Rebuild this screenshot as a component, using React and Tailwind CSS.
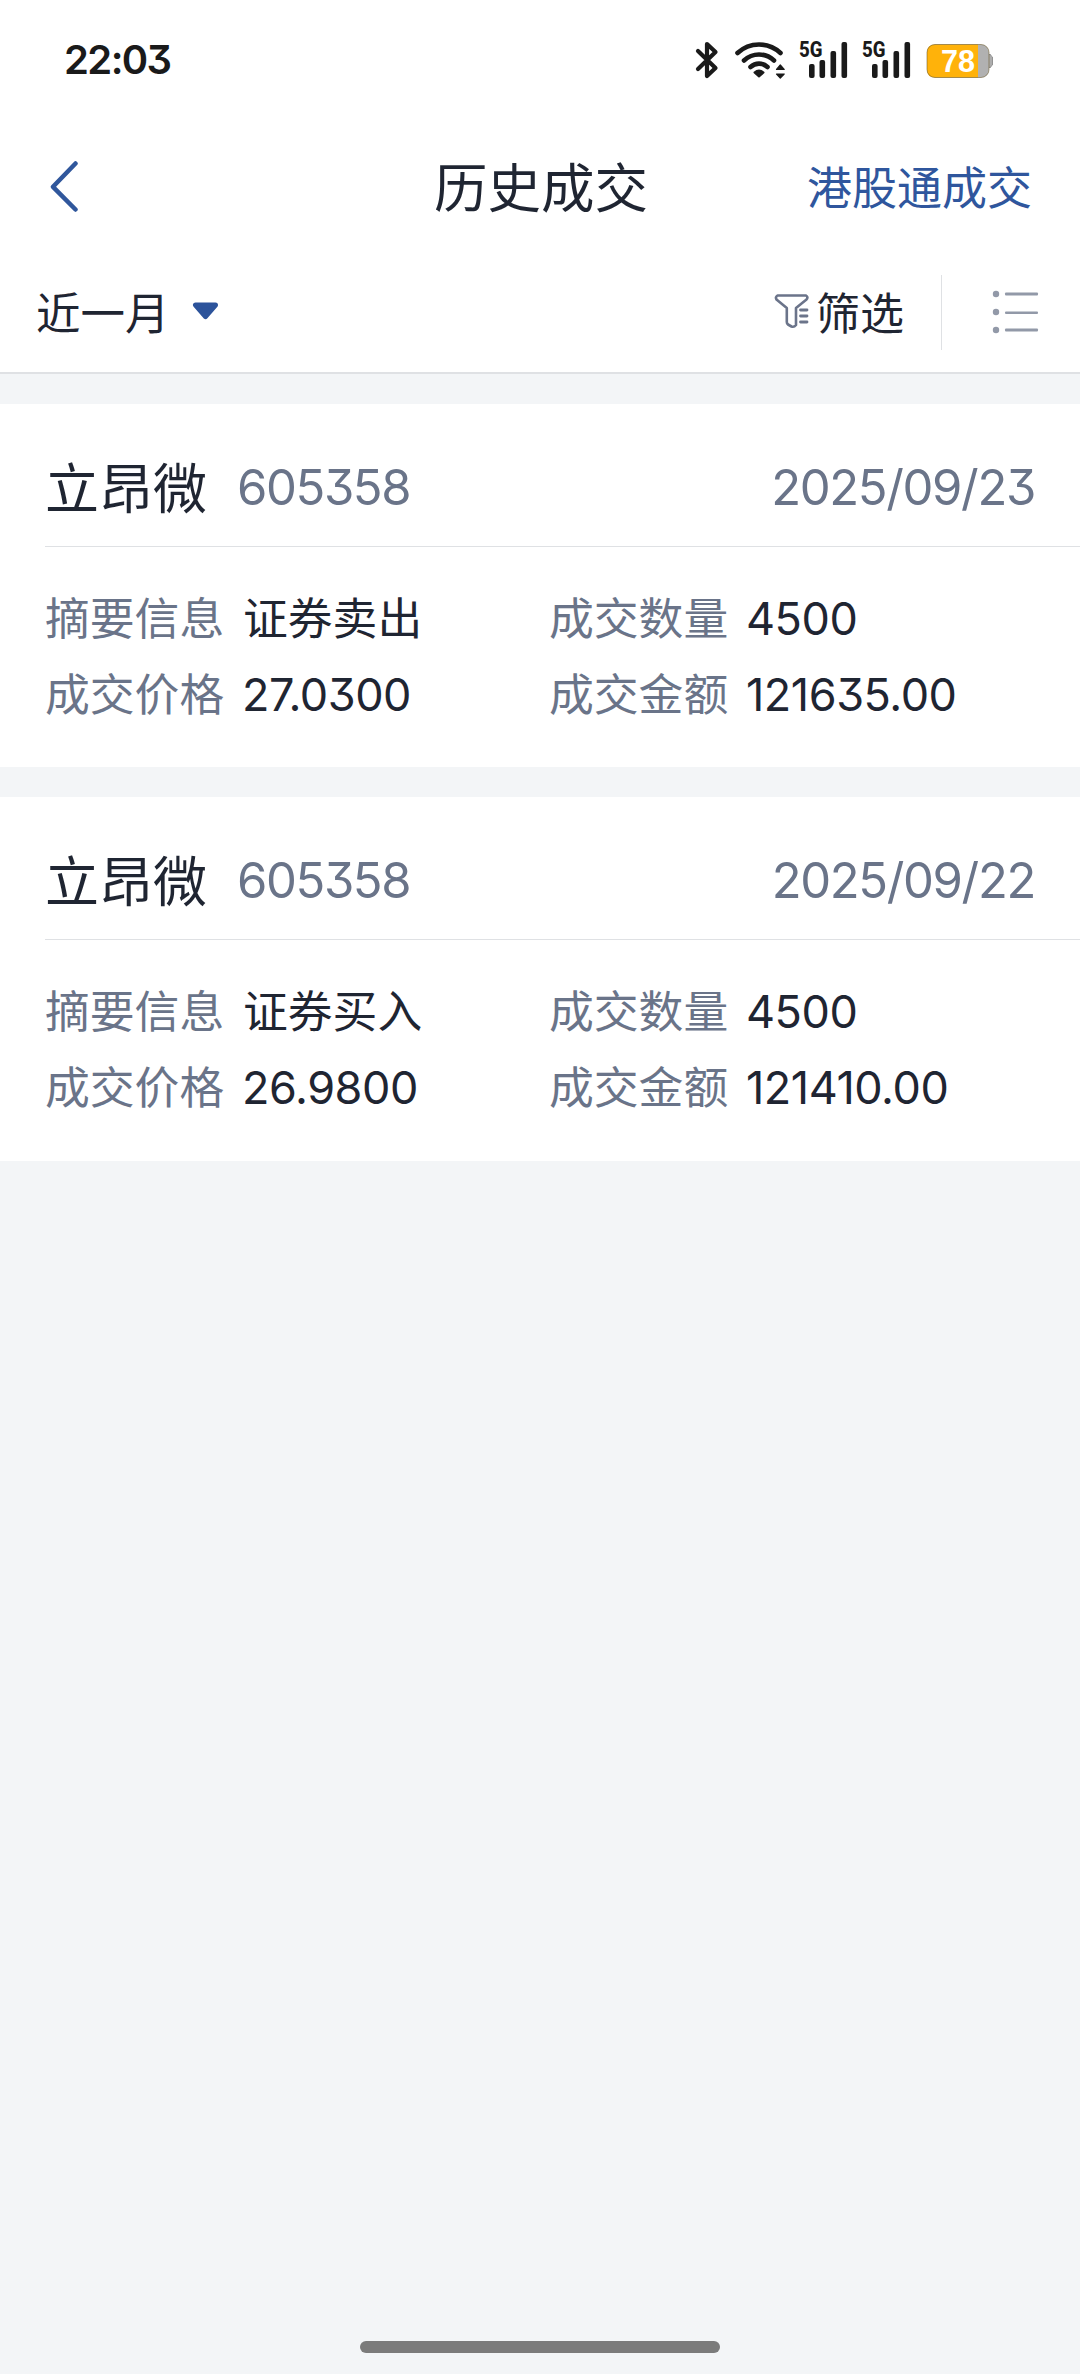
const trades = [
  {
    name: "立昂微", code: "605358", date: "2025/09/23",
    action: "证券卖出", amount: "4500", price: "27.0300", total: "121635.00",
  },
  {
    name: "立昂微", code: "605358", date: "2025/09/22",
    action: "证券买入", amount: "4500", price: "26.9800", total: "121410.00",
  },
];

function Bluetooth() {
  return (
    <svg className="h-[38px] w-[24px]" viewBox="0 0 24 38" fill="none" stroke="#1a1a1a" strokeWidth="4.2" strokeLinejoin="round" strokeLinecap="round">
      <path d="M3 10 L20.5 27 L12 35 V3 L20.5 11 L3 28" />
    </svg>
  );
}

function Wifi() {
  return (
    <svg className="h-[38px] w-[52px]" viewBox="0 0 52 38" fill="none" stroke="#1a1a1a" strokeWidth="4.6" strokeLinecap="round">
      <path d="M3.5 12 C15.5 0.6 34.5 0.6 46.5 12" />
      <path d="M10 19.5 C18.5 11.5 31.5 11.5 40 19.5" />
      <path d="M16.5 26 C21.5 21.5 28.5 21.5 33.5 26" />
      <path d="M20.5 31.5 Q25 27.5 29.5 31.5 L25 35.5 Z" fill="#1a1a1a" strokeWidth="2" strokeLinejoin="round" />
      <path d="M42.5 28.5 L46.3 24 L50.2 28.5 Z M42.5 33 L46.3 37 L50.2 33 Z" fill="#1a1a1a" strokeWidth="1.2" strokeLinejoin="round" />
    </svg>
  );
}

function Signal() {
  return (
    <svg className="h-[38px] w-[49px] overflow-visible" viewBox="0 0 49 38" fill="#1a1a1a">
      <text x="0" y="15.5" fontFamily="Roboto" fontWeight="800" fontSize="21.5" textLength="23.5" lengthAdjust="spacingAndGlyphs">5G</text>
      <rect x="10" y="23" width="5.6" height="14" rx="2" />
      <rect x="20.5" y="19" width="5.6" height="18" rx="2" />
      <rect x="31.5" y="10" width="5.6" height="27" rx="2" />
      <rect x="42.5" y="1" width="5.6" height="36" rx="2" />
    </svg>
  );
}

function Battery() {
  return (
    <svg className="h-[36px] w-[68px]" viewBox="0 0 68 36">
      <path d="M62 11.5 h2.5 q0.5 2 2 2.5 v8 q-1.5 0.5 -2 2.5 h-2.5 Z" fill="#adadad" stroke="#929292" />
      <rect x="1" y="1.5" width="62" height="33" rx="8" fill="#b1b1b1" />
      <path d="M9 1.5 H52 V34.5 H9 Q1 34.5 1 26.5 V9.5 Q1 1.5 9 1.5 Z" fill="#ffb20a" />
      <rect x="1" y="1.5" width="62" height="33" rx="8" fill="none" stroke="#6b5a2a" strokeOpacity="0.55" />
      <text x="15" y="29.3" fontFamily="Liberation Sans" fontWeight="700" fontSize="32" fill="#fff" textLength="34" lengthAdjust="spacingAndGlyphs">78</text>
    </svg>
  );
}

function StatusBar() {
  return (
    <div className="flex h-[119px] items-center pl-[64px] pr-[86px]">
      <span className="text-[40px] font-semibold leading-none tracking-[-1.6px] text-[#1a1a1a]">22:03</span>
      <div className="ml-auto flex items-center">
        <Bluetooth />
        <div className="ml-[15px] flex"><Wifi /></div>
        <div className="ml-[13px] flex gap-[14px]">
          <Signal />
          <Signal />
        </div>
        <div className="ml-[15px] mt-[2px]"><Battery /></div>
      </div>
    </div>
  );
}

function Header() {
  return (
    <header className="grid h-[133px] grid-cols-[1fr_auto_1fr] items-center pl-[50px] pr-[48px]">
      <svg className="h-[54px] w-[30px]" viewBox="0 0 30 54" fill="none" stroke="#30579c" strokeWidth="4.5" strokeLinecap="round" strokeLinejoin="round">
        <path d="M25.5 4.5 L3 27.8 L25.5 50.5" />
      </svg>
      <h1 className="pt-[7px] text-[53.5px] leading-none text-[#1f2532]">历史成交</h1>
      <span className="pt-[5px] text-right text-[45px] leading-none text-[#2f569d]">港股通成交</span>
    </header>
  );
}

function FilterBar() {
  return (
    <div className="flex h-[122px] items-center border-b-2 border-[#dfe1e4] pl-[36px] pr-[40px] text-[44.5px] leading-none text-[#1f2532]">
      <span className="pt-[4px]">近一月</span>
      <svg className="mb-[3px] ml-[22px] h-[18px] w-[27px]" viewBox="0 0 27 18">
        <path d="M3.5 3 H23.5 L13.5 14.5 Z" fill="#2c539b" stroke="#2c539b" strokeWidth="5" strokeLinejoin="round" />
      </svg>
      <svg className="mb-[3px] ml-auto h-[36px] w-[36px]" viewBox="0 0 36 36" fill="none" stroke="#6b748a" strokeWidth="2.6" strokeLinejoin="round" strokeLinecap="round">
        <path d="M3.5 2.5 H32 Q34.5 4 32.5 6.5 L22 15 V32 Q20 34.5 17.5 33.5 L14 31.5 Q12.8 30.5 12.8 29 V15 L2.5 6.5 Q1 4 3.5 2.5 Z" />
        <path d="M26.5 17 H33 M26.5 23 H33 M26.5 29 H33" strokeWidth="2.8" />
      </svg>
      <span className="ml-[6px] pt-[3px] text-[44px]">筛选</span>
      <div className="ml-[37px] h-[75px] w-px bg-[#dfe1e4]" />
      <svg className="mb-px ml-[50px] h-[44px] w-[48px]" viewBox="0 0 48 44" fill="#9299a8">
        <circle cx="4" cy="4" r="3.2" />
        <circle cx="4" cy="22" r="3.2" />
        <circle cx="4" cy="40" r="3.2" />
        <rect x="13" y="2.5" width="33" height="3" rx="1" />
        <rect x="13" y="21.5" width="33" height="2.6" rx="1" />
        <rect x="13" y="38.5" width="33" height="3" rx="1" />
      </svg>
    </div>
  );
}

function Field({ label, value, numeric }) {
  return (
    <div className="flex h-[76px] items-center">
      <span className="w-[198px] pt-[2px] text-[44.8px] text-[#6a7489]">{label}</span>
      {numeric ? (
        <span className="-ml-px text-[45px] tracking-[-0.45px] text-[#1f2532]">{value}</span>
      ) : (
        <span className="pt-[2px] text-[44.8px] text-[#1f2532]">{value}</span>
      )}
    </div>
  );
}

function TradeCard({ trade }) {
  return (
    <section className="h-[363px] bg-white pl-[45px] leading-none last:h-[364px]">
      <div className="flex h-[143px] items-center border-b border-[#dfe1e4] pr-[45px] pt-[25px]">
        <span className="pt-[4px] text-[54px] text-[#1f2532]">{trade.name}</span>
        <span className="ml-[30px] text-[49px] tracking-[-1.4px] text-[#6a7489]">{trade.code}</span>
        <span className="ml-auto text-[49px] tracking-[-1.35px] text-[#6a7489]">{trade.date}</span>
      </div>
      <div className="grid grid-cols-[504px_1fr] pt-[33px]">
        <Field label="摘要信息" value={trade.action} />
        <Field label="成交数量" value={trade.amount} numeric />
        <Field label="成交价格" value={trade.price} numeric />
        <Field label="成交金额" value={trade.total} numeric />
      </div>
    </section>
  );
}

export default function App() {
  return (
    <div className="flex h-[2374px] w-[1080px] flex-col bg-[#f3f5f7] font-['Inter','Noto_Sans_CJK_SC',sans-serif] [font-feature-settings:'cv09']">
      <div className="bg-white">
        <StatusBar />
        <Header />
        <FilterBar />
      </div>
      <main className="mt-[30px] flex flex-col gap-[30px]">
        {trades.map((trade) => (
          <TradeCard key={trade.date} trade={trade} />
        ))}
      </main>
      <div className="mx-auto mb-[21px] mt-auto h-[12px] w-[360px] rounded-full bg-[#7b7b7b]" />
    </div>
  );
}
